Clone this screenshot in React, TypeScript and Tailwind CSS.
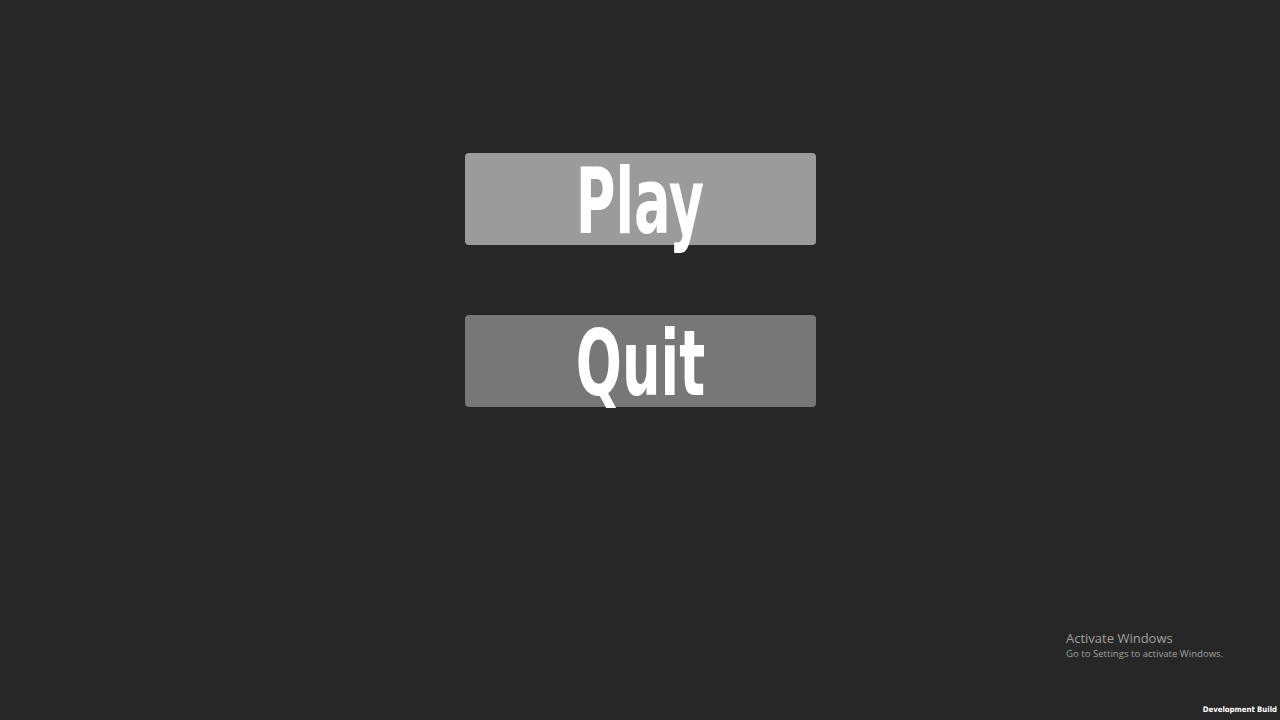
import React from 'react';

const MenuButton: React.FC<{ label: string; className: string }> = ({ label, className }) => (
  <button
    type="button"
    className={`flex h-[92px] w-[351px] items-center justify-center rounded-[4px] ${className}`}
  >
    <span
      className="block translate-y-[3px] scale-x-[0.67] text-[90px] font-bold leading-none text-white"
      style={{ fontFamily: '"DejaVu Sans Condensed", "Liberation Sans", sans-serif' }}
    >
      {label}
    </span>
  </button>
);

export default function App() {
  return (
    <div className="relative h-[720px] w-[1280px] overflow-hidden bg-[#272727]">
      <div className="flex flex-col items-center gap-[70px] pt-[153px]">
        <MenuButton label="Play" className="bg-[#9b9b9b]" />
        <MenuButton label="Quit" className="bg-[#777777]" />
      </div>

      <div className="absolute left-[1066px] top-[630px] font-['Open_Sans',sans-serif] text-[#a0a0a0]">
        <div className="text-[13px] leading-[17px]">Activate Windows</div>
        <div className="text-[9.6px] leading-[13px]">Go to Settings to activate Windows.</div>
      </div>

      <div className="absolute bottom-[6px] right-[3px] font-['DejaVu_Sans_Condensed',sans-serif] text-[7.7px] font-bold leading-none text-white">
        Development Build
      </div>
    </div>
  );
}
